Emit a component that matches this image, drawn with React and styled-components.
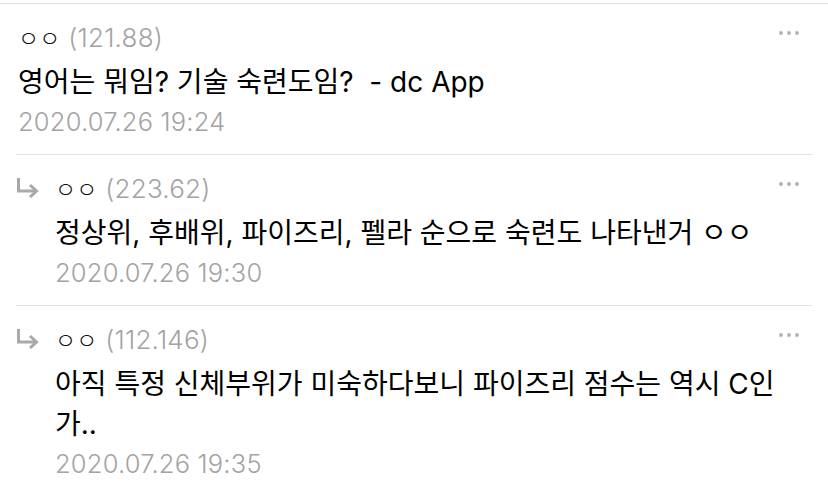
import React from "react";
import styled, { createGlobalStyle } from "styled-components";

const GlobalStyle = createGlobalStyle`
  html, body {
    margin: 0;
    padding: 0;
    background: #ffffff;
  }
  body {
    font-family: "Inter", "Noto Sans CJK KR", sans-serif;
    color: #000000;
    -webkit-font-smoothing: antialiased;
  }
`;

const List = styled.div`
  margin-top: 3px;
  border-top: 1px solid #e2e2e2;
  width: 828px;
`;

const Item = styled.div`
  margin: 0 16px;
  padding: 19px 0 17px;
  display: grid;
  grid-template-columns: ${p => (p.$reply ? "39px" : "2px")} 1fr;
  & + & {
    border-top: 1px solid #e2e2e2;
  }
`;

const Gutter = styled.div`
  height: 28px;
  display: flex;
  align-items: center;
`;

const Main = styled.div`
  display: flex;
  flex-direction: column;
  min-width: 0;
`;

const Head = styled.div`
  display: flex;
  align-items: center;
  height: 28px;
  padding-right: 13px;
`;

const Name = styled.span`
  font-size: 23px;
  font-weight: 300;
  color: #111;
  margin-right: 8px;
`;

const Score = styled.span`
  font-size: 26px;
  font-weight: 300;
  letter-spacing: 0.2px;
  color: #a3a3a3;
`;

const More = styled.div`
  margin-left: auto;
  display: flex;
  gap: 4px;
  align-self: flex-start;
  margin-top: 8px;
`;

const Dot = styled.i`
  width: 4px;
  height: 4px;
  border-radius: 50%;
  background: #b4b4b4;
`;

const Body = styled.div`
  margin-top: 11px;
  font-size: 28px;
  line-height: 40px;
  color: #000;
  padding-right: 20px;
`;

const Date = styled.div`
  margin-top: 5px;
  font-size: 25.5px;
  font-weight: 300;
  letter-spacing: 0.2px;
  line-height: 30px;
  color: #a3a3a3;
`;

function ReplyArrow() {
  return (
    <svg width="23" height="20" viewBox="0 0 23 20" fill="none">
      <path d="M2.5 0 V13 H20" stroke="#a9a9a9" strokeWidth="3" />
      <path d="M14 7 L20.5 13 L14 19" stroke="#a9a9a9" strokeWidth="3" />
    </svg>
  );
}

const comments = [
  {
    name: "ㅇㅇ",
    score: "(121.88)",
    text: "영어는 뭐임? 기술 숙련도임?\u00a0 - dc App",
    date: "2020.07.26 19:24",
  },
  {
    reply: true,
    name: "ㅇㅇ",
    score: "(223.62)",
    text: "정상위, 후배위, 파이즈리, 펠라 순으로 숙련도 나타낸거 ㅇㅇ",
    date: "2020.07.26 19:30",
  },
  {
    reply: true,
    name: "ㅇㅇ",
    score: "(112.146)",
    text: "아직 특정 신체부위가 미숙하다보니 파이즈리 점수는 역시 C인가..",
    date: "2020.07.26 19:35",
  },
];

function App() {
  return (
    <React.Fragment>
      <GlobalStyle />
      <List>
        {comments.map((c, i) => (
          <Item key={i} $reply={c.reply}>
            <Gutter>{c.reply && <ReplyArrow />}</Gutter>
            <Main>
              <Head>
                <Name>{c.name}</Name>
                <Score>{c.score}</Score>
                <More>
                  <Dot />
                  <Dot />
                  <Dot />
                </More>
              </Head>
              <Body>{c.text}</Body>
              <Date>{c.date}</Date>
            </Main>
          </Item>
        ))}
      </List>
    </React.Fragment>
  );
}

export default App;
